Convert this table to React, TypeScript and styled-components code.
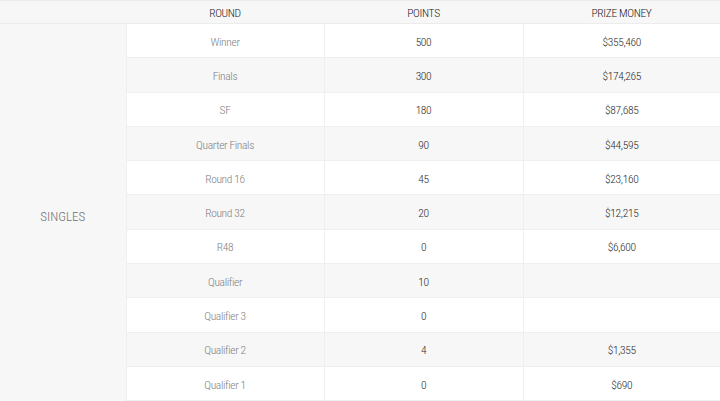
import React from "react";
import styled, { createGlobalStyle } from "styled-components";

const Global = createGlobalStyle`
  html, body { margin: 0; padding: 0; background: #fff; }
  body { font-family: Roboto, "Liberation Sans", sans-serif; }
`;

const Table = styled.table`
  width: 720px;
  border-collapse: collapse;
  table-layout: fixed;
  font-family: Roboto, "Liberation Sans", sans-serif;
  font-stretch: condensed;
  font-size: 11.5px;
  letter-spacing: -0.35px;
  border-top: 1px solid #ececec;
`;

const HeadCell = styled.th`
  height: 21px;
  padding: 1px 0 0;
  background: #f7f7f7;
  color: #222;
  font-weight: 300;
  text-align: center;
  vertical-align: middle;
  border-bottom: 1px solid #ececec;
`;

const Row = styled.tr<{ $alt: boolean }>`
  background: ${(p) => (p.$alt ? "#f7f7f7" : "#ffffff")};
`;

const Cell = styled.td<{ $muted?: boolean }>`
  height: 31.3px;
  padding: 2px 0 0;
  text-align: center;
  vertical-align: middle;
  font-weight: 300;
  color: ${(p) => (p.$muted ? "#808080" : "#2a2a2a")};
  border-bottom: 1px solid #efefef;
  border-left: 1px solid #efefef;
`;

const GroupCell = styled.td`
  padding: 9px 0 0;
  background: #f7f7f7;
  color: #707070;
  font-size: 13px;
  font-weight: 300;
  letter-spacing: 0;
  text-align: center;
  vertical-align: middle;
`;

const rows: [string, string, string][] = [
  ["Winner", "500", "$355,460"],
  ["Finals", "300", "$174,265"],
  ["SF", "180", "$87,685"],
  ["Quarter Finals", "90", "$44,595"],
  ["Round 16", "45", "$23,160"],
  ["Round 32", "20", "$12,215"],
  ["R48", "0", "$6,600"],
  ["Qualifier", "10", ""],
  ["Qualifier 3", "0", ""],
  ["Qualifier 2", "4", "$1,355"],
  ["Qualifier 1", "0", "$690"],
];

export default function App() {
  return (
    <>
      <Global />
      <Table>
        <colgroup>
          <col style={{ width: 126 }} />
          <col style={{ width: 198 }} />
          <col style={{ width: 199 }} />
          <col style={{ width: 197 }} />
        </colgroup>
        <thead>
          <tr>
            <HeadCell />
            <HeadCell>ROUND</HeadCell>
            <HeadCell>POINTS</HeadCell>
            <HeadCell>PRIZE MONEY</HeadCell>
          </tr>
        </thead>
        <tbody>
          {rows.map(([r, p, m], i) => (
            <Row key={r} $alt={i % 2 === 1}>
              {i === 0 && <GroupCell rowSpan={rows.length}>SINGLES</GroupCell>}
              <Cell $muted>{r}</Cell>
              <Cell>{p}</Cell>
              <Cell>{m}</Cell>
            </Row>
          ))}
        </tbody>
      </Table>
    </>
  );
}
